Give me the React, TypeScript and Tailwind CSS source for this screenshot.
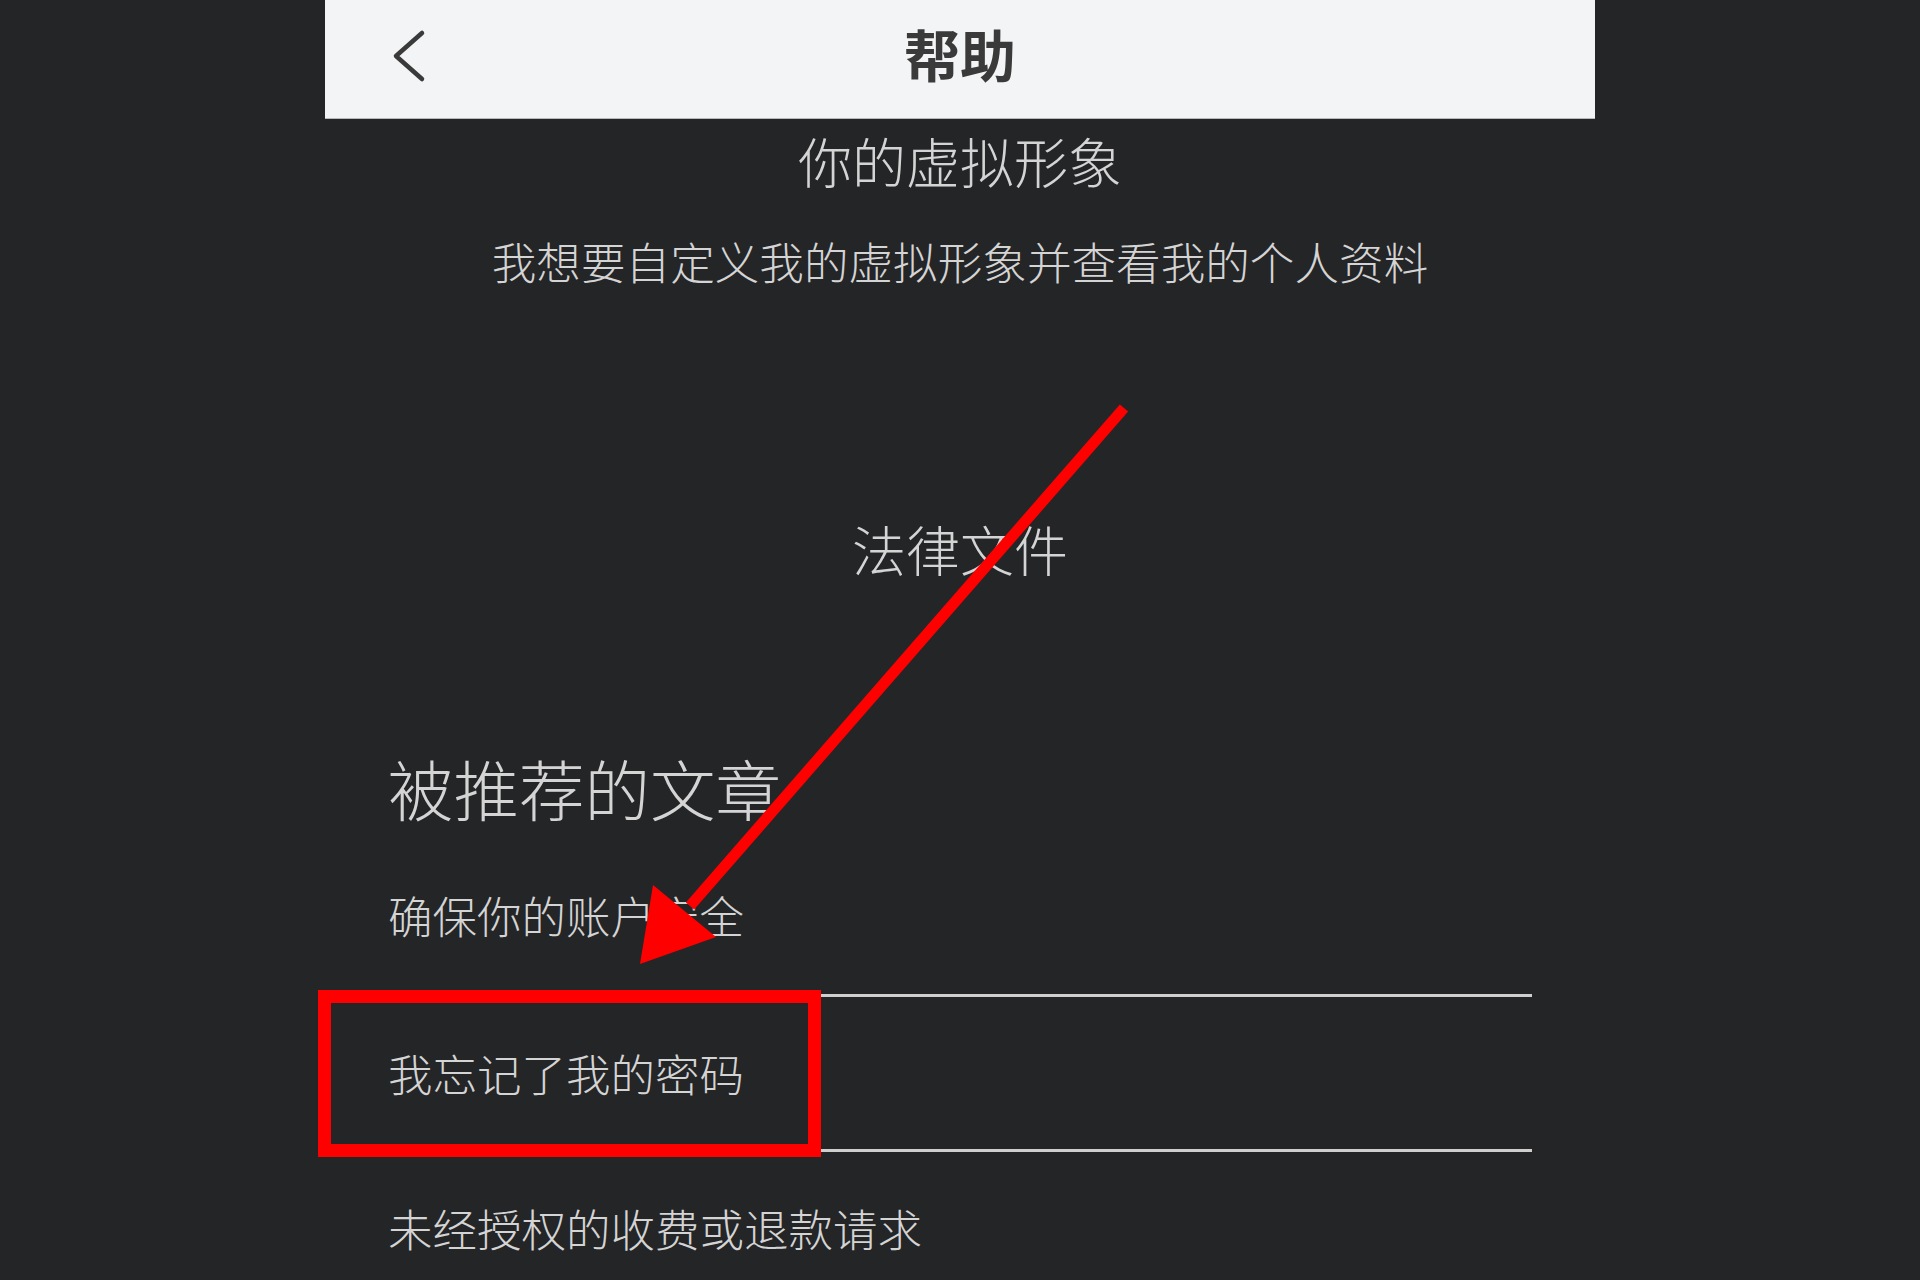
const FONT = "font-['Noto_Sans_CJK_SC','Noto_Sans',sans-serif]"

const ARTICLES = ['确保你的账户安全', '我忘记了我的密码', '未经授权的收费或退款请求']

// 每行高度（含 3px 分隔线）
const ROW_HEIGHTS = ['h-[161px]', 'h-[155px]', 'h-[152px]']

/** 顶部导航栏：返回 + 标题 */
function TopBar() {
  return (
    <div className="relative flex h-[119px] items-center justify-center border-b border-[#b9b9b9] bg-[#f3f4f6] pb-[12px]">
      <svg className="absolute left-[66px] top-[28px]" width="40" height="58" viewBox="0 0 40 58">
        <polyline points="31,5 5,28 31,51" fill="none" stroke="#3a3a3a" strokeWidth="4.5" strokeLinecap="round" strokeLinejoin="round" />
      </svg>
      <h1 className="text-[56px] font-bold leading-none text-[#3a3a3a]">帮助</h1>
    </div>
  )
}

/** 推荐文章行，第二行带红色标注框 */
function ArticleRow({ title, index }: { title: string; index: number }) {
  const last = index === ARTICLES.length - 1
  return (
    <div className={`relative flex items-center ${ROW_HEIGHTS[index]} ${last ? '' : 'border-b-[3px] border-[#cfcfcf]'}`}>
      <span className="text-[44.5px] font-light leading-none text-[#d4d4d4]">{title}</span>
      {index === 1 && (
        <div className="absolute left-[-70px] top-[-7px] h-[167px] w-[503px] border-[13px] border-[#ff0000]" />
      )}
    </div>
  )
}

export default function App() {
  return (
    <div className={`relative min-h-[1280px] w-full overflow-hidden bg-[#242527] ${FONT}`}>
      <div className="mx-auto w-[1270px]">
        <TopBar />

        <div className="flex h-[84px] items-center justify-center">
          <span className="text-[54px] font-light leading-none text-[#d4d4d4]">你的虚拟形象</span>
        </div>
        <div className="flex h-[116px] items-center justify-center">
          <span className="text-[44.6px] font-light leading-none text-[#d4d4d4]">我想要自定义我的虚拟形象并查看我的个人资料</span>
        </div>

        <div className="mt-[180px] flex h-[100px] items-center justify-center">
          <span className="text-[54px] font-light leading-none text-[#d4d4d4]">法律文件</span>
        </div>

        <div className="mt-[141px] px-[63px]">
          <div className="flex h-[96px] items-center">
            <h2 className="text-[65.5px] font-light leading-none text-[#d4d4d4]">被推荐的文章</h2>
          </div>
          {ARTICLES.map((a, i) => (
            <ArticleRow key={a} title={a} index={i} />
          ))}
        </div>
      </div>

      {/* 指向“我忘记了我的密码”的红色箭头 */}
      <svg className="pointer-events-none absolute left-0 top-0" width="1920" height="1280" viewBox="0 0 1920 1280">
        <line x1="1124" y1="408" x2="690" y2="906" stroke="#ff0000" strokeWidth="11" />
        <polygon points="640,964 653,885 716,937" fill="#ff0000" />
      </svg>
    </div>
  )
}
